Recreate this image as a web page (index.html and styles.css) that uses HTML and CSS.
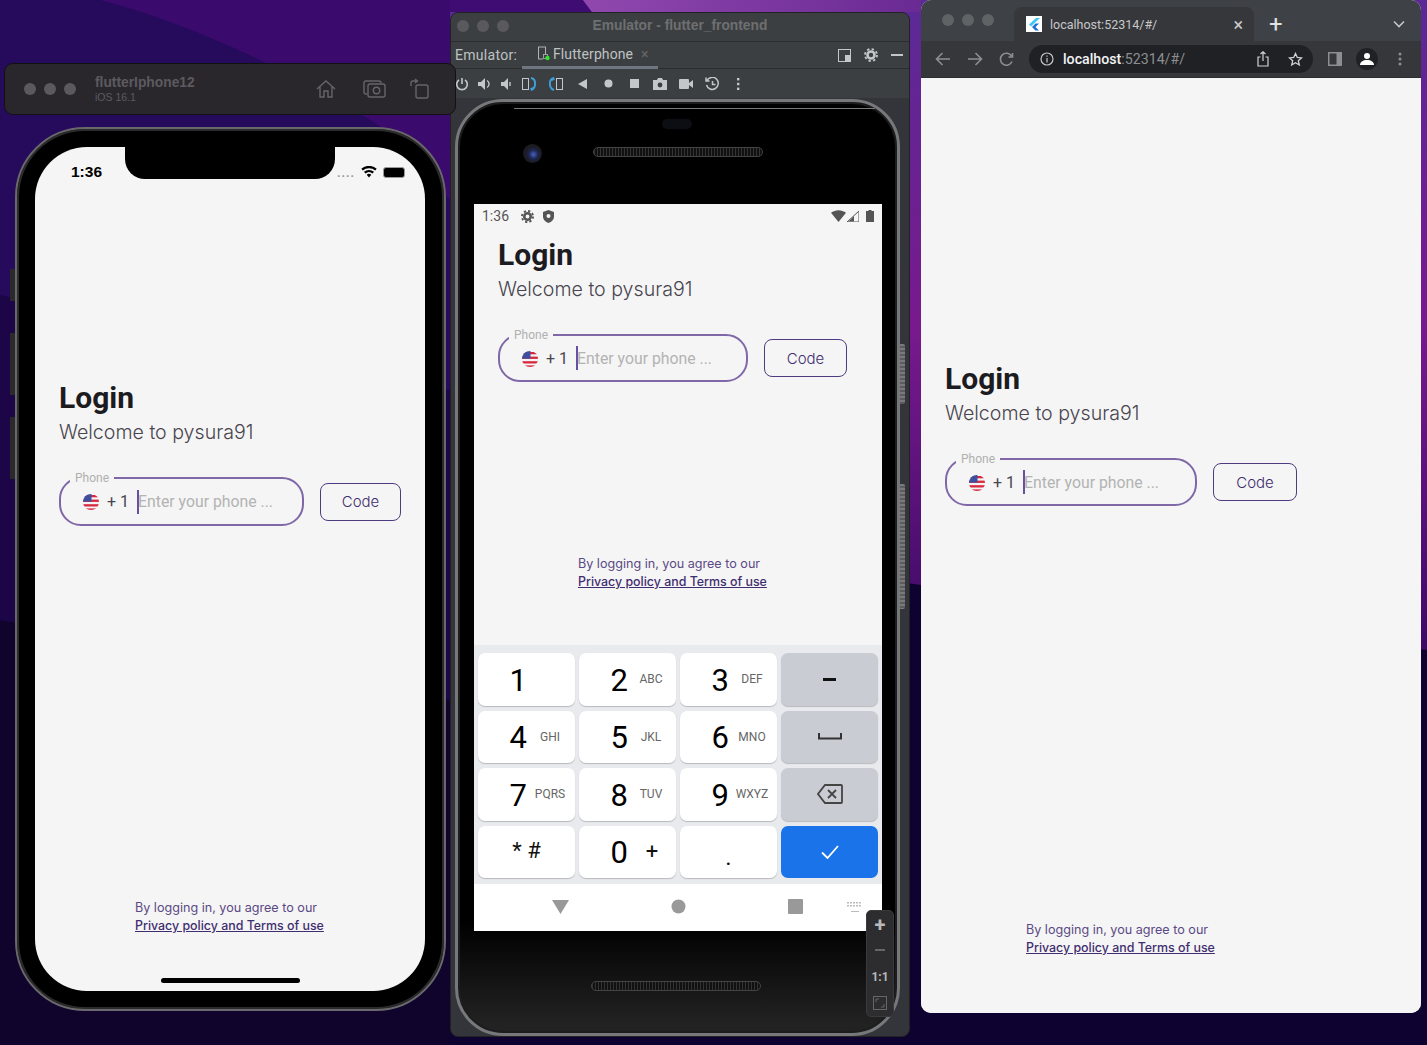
FILE: index.html
```html
<!DOCTYPE html>
<html lang="en">
<head>
    <meta charset="UTF-8">
    <meta name="viewport" content="width=device-width, initial-scale=1.0">
    <title>flutter login on three devices</title>
    <link rel="stylesheet" href="styles.css">
</head>
<body>

    <svg class="hidden-defs" width="0" height="0">
        <defs>
            <clipPath id="flagClip"><circle cx="8" cy="8" r="8"/></clipPath>
            <symbol id="flag" viewBox="0 0 16 16">
                <g clip-path="url(#flagClip)">
                    <rect width="16" height="16" fill="#f4f4f6"/>
                    <rect y="1" width="16" height="2.3" fill="#d8283c"/>
                    <rect y="5.6" width="16" height="2.3" fill="#d8283c"/>
                    <rect y="10.2" width="16" height="2.3" fill="#d8283c"/>
                    <rect y="14.4" width="16" height="2" fill="#d8283c"/>
                    <rect width="8.5" height="7.6" fill="#3d4f9e"/>
                </g>
            </symbol>
        </defs>
    </svg>

    <!-- wallpaper -->
    <svg class="wallpaper" viewBox="0 0 1427 1045" preserveAspectRatio="none">
        <defs>
            <linearGradient id="wallPink" gradientUnits="userSpaceOnUse" x1="0" y1="0" x2="0" y2="650">
                <stop offset="0" stop-color="#5a2a96"/>
                <stop offset="0.5" stop-color="#781a8e"/>
                <stop offset="1" stop-color="#3c0a66"/>
            </linearGradient>
            <linearGradient id="wallTop" gradientUnits="userSpaceOnUse" x1="583" y1="0" x2="920" y2="0">
                <stop offset="0" stop-color="#9048ae"/>
                <stop offset="1" stop-color="#6a2a94"/>
            </linearGradient>
        </defs>
        <rect width="1427" height="1045" fill="#3a0a6c"/>
        <path d="M100 0C200 25 330 90 400 140L450 200V1045H0V0Z" fill="#260a5c"/>
        <path d="M0 295 450 390V1045H0Z" fill="#1c0648"/>
        <path d="M0 620 450 700V1045H0Z" fill="#10032c"/>
        <path d="M583 0H1427V650L921 585 450 520V0Z" fill="url(#wallPink)"/>
        <path d="M450 0H583L592 12H450Z" fill="#3f0c74"/>
        <path d="M583 0H921V12H592Z" fill="url(#wallTop)"/>
        <path d="M450 520 921 585 1427 650V1045H450Z" fill="#0e0330"/>
    </svg>

    <!-- ios simulator toolbar -->
    <div class="sim-bar">
        <div class="lights lights-dim"><i></i><i></i><i></i></div>
        <div class="sim-title">
            <b>flutterIphone12</b>
            <span>iOS 16.1</span>
        </div>
        <div class="sim-icons">
            <svg width="22" height="20" viewBox="0 0 22 20" fill="none" stroke="#66646a" stroke-width="1.4"><path d="M2 10 11 2l9 8M5 8v10h4v-6h4v6h4V8"/></svg>
            <svg width="24" height="20" viewBox="0 0 24 20" fill="none" stroke="#66646a" stroke-width="1.4"><path d="M4 15H3a2 2 0 0 1-2-2V4a2 2 0 0 1 2-2h13a2 2 0 0 1 2 2"/><rect x="5" y="5" width="17" height="13" rx="2"/><circle cx="13.500" cy="11.500" r="3.200"/></svg>
            <svg class="sim-rotate" width="20" height="22" viewBox="0 0 20 22" fill="none" stroke="#66646a" stroke-width="1.4"><rect x="6" y="7" width="12" height="13" rx="2"/><path d="M1 8V5a2 2 0 0 1 2-2h4M5 1 7.500 3 5 5"/></svg>
        </div>
    </div>

    <!-- iphone -->
    <div class="iphone">
        <i class="side-btn side-a"></i><i class="side-btn side-b"></i><i class="side-btn side-c"></i>
        <div class="screen screen-ios">
            <div class="notch"></div>
            <div class="ios-time">1:36</div>
            <div class="ios-status">
                <span class="ios-dots">....</span>
                <svg width="16" height="12" viewBox="0 0 16 12"><path d="M8 11.500 5.700 8.800a3.500 3.500 0 0 1 4.600 0ZM4.500 7.500 3 5.800a7.500 7.500 0 0 1 10 0l-1.500 1.700a5.300 5.300 0 0 0-7 0ZM1.800 4.500 .3 2.800a11.500 11.500 0 0 1 15.400 0l-1.500 1.700a9.300 9.300 0 0 0-12.400 0Z" fill="#000"/></svg>
                <span class="ios-battery"></span>
            </div>
            <div class="login">
                <h1>Login</h1>
                <p class="welcome">Welcome to pysura91</p>
                <div class="form-row">
                    <div class="phone-field">
                        <span class="field-label">Phone</span>
                        <svg class="flag" width="16" height="16"><use href="#flag"/></svg>
                        <span class="dial">+ 1</span>
                        <span class="caret"></span>
                        <span class="placeholder">Enter your phone ...</span>
                    </div>
                    <button class="code-btn">Code</button>
                </div>
            </div>
            <div class="legal">
                <div>By logging in, you agree to our</div>
                <a>Privacy policy and Terms of use</a>
            </div>
            <div class="home-bar"></div>
        </div>
    </div>

    <!-- android studio emulator -->
    <div class="emulator">
        <div class="emu-title">
            <div class="lights lights-dim"><i></i><i></i><i></i></div>
            <span>Emulator - flutter_frontend</span>
        </div>
        <div class="emu-tabs">
            <span class="emu-label">Emulator:</span>
            <div class="emu-tab">
                <svg width="14" height="15" viewBox="0 0 14 15" fill="none"><rect x="1.500" y="1" width="7" height="12" stroke="#b0b4b8"/><rect x="6" y="8" width="7" height="6" fill="#3c3f41"/><rect x="6.500" y="8.500" width="4" height="4" stroke="#b0b4b8" stroke-width=".8"/><circle cx="10.500" cy="12" r="2.200" fill="#2fe32f"/></svg>
                <span>Flutterphone</span>
                <em>×</em>
            </div>
            <div class="emu-tools">
                <svg width="13" height="13" viewBox="0 0 13 13"><rect x=".5" y=".5" width="12" height="12" fill="none" stroke="#c4c7ca"/><rect x="7" y="6" width="5" height="6" fill="#c4c7ca"/></svg>
                <svg width="14" height="14" viewBox="0 0 14 14"><circle cx="7" cy="7" r="3.500" fill="none" stroke="#c4c7ca" stroke-width="2.600"/><circle cx="7" cy="7" r="6" fill="none" stroke="#c4c7ca" stroke-width="1.800" stroke-dasharray="2.400 2.300"/></svg>
                <svg width="12" height="2" viewBox="0 0 12 2"><rect width="12" height="2" fill="#c4c7ca"/></svg>
            </div>
        </div>
        <div class="emu-toolbar">
            <svg width="14" height="14" viewBox="0 0 14 14" fill="none" stroke="#c4c7ca" stroke-width="1.600"><path d="M4 3a5.300 5.300 0 1 0 6 0M7 1v6"/></svg>
            <svg width="14" height="14" viewBox="0 0 14 14"><path d="M0 5h3l4-4v12l-4-4H0Z" fill="#c4c7ca"/><path d="M9 3.500a4 4 0 0 1 0 7" fill="none" stroke="#c4c7ca" stroke-width="1.400"/></svg>
            <svg width="12" height="14" viewBox="0 0 12 14"><path d="M0 5h3l4-4v12l-4-4H0Z" fill="#c4c7ca"/><path d="M9 5v4" stroke="#c4c7ca" stroke-width="1.400"/></svg>
            <svg width="15" height="14" viewBox="0 0 15 14" fill="none"><rect x=".5" y="1.500" width="6" height="11" stroke="#c4c7ca"/><path d="M9 1c5.500 1 5.500 10 0 12M8.500 12.500l3-1.500" stroke="#3d9ed8" stroke-width="2"/></svg>
            <svg width="15" height="14" viewBox="0 0 15 14" fill="none"><rect x="8.500" y="1.500" width="6" height="11" stroke="#c4c7ca"/><path d="M6 1c-5.500 1-5.500 10 0 12M6.500 1.500l-3 1.500" stroke="#3d9ed8" stroke-width="2"/></svg>
            <svg width="9" height="10" viewBox="0 0 9 10"><path d="M9 0v10L0 5Z" fill="#c4c7ca"/></svg>
            <svg width="9" height="9" viewBox="0 0 9 9"><circle cx="4.500" cy="4.500" r="4" fill="#c4c7ca"/></svg>
            <svg width="9" height="9" viewBox="0 0 9 9"><rect width="9" height="9" fill="#c4c7ca"/></svg>
            <svg width="14" height="12" viewBox="0 0 14 12"><path d="M0 2h4l1-2h4l1 2h4v10H0Z" fill="#c4c7ca"/><circle cx="7" cy="7" r="2.400" fill="#3c3f41"/></svg>
            <svg width="14" height="10" viewBox="0 0 14 10"><rect width="10" height="10" rx="1" fill="#c4c7ca"/><path d="M10 4l4-3v8l-4-3Z" fill="#c4c7ca"/></svg>
            <svg width="15" height="14" viewBox="0 0 15 14" fill="none" stroke="#c4c7ca" stroke-width="1.500"><path d="M2 3.500A6 6 0 1 1 1.500 8M1 .5v3.500h3.500M7.500 4v3.500h3"/></svg>
            <svg width="4" height="12" viewBox="0 0 4 12"><g fill="#c4c7ca"><rect x="1" width="2.400" height="2.400"/><rect x="1" y="4.800" width="2.400" height="2.400"/><rect x="1" y="9.600" width="2.400" height="2.400"/></g></svg>
        </div>
        <div class="emu-stage">
            <div class="android">
                <i class="power-btn power-a"></i><i class="power-btn power-b"></i>
                <div class="android-top">
                    <div class="earpiece"></div>
                    <div class="camera"></div>
                    <div class="speaker"></div>
                </div>
                <div class="screen screen-android">
                    <div class="status">
                        <span>1:36</span>
                        <svg width="13" height="13" viewBox="0 0 14 14"><circle cx="7" cy="7" r="3.500" fill="none" stroke="#555" stroke-width="2.800"/><circle cx="7" cy="7" r="6" fill="none" stroke="#555" stroke-width="2" stroke-dasharray="2.400 2.300"/></svg>
                        <svg class="status-shield" width="11" height="13" viewBox="0 0 11 13"><path d="M5.500 0 11 2v4.500c0 3-2.300 5.500-5.500 6.500C2.300 12 0 9.500 0 6.500V2Z" fill="#555"/><circle cx="5.500" cy="6" r="2" fill="#f5f5f5"/></svg>
                        <span class="status-right">
                            <svg width="15" height="12" viewBox="0 0 14 11"><path d="M7 11 0 2.500C4-.8 10-.8 14 2.500Z" fill="#555"/></svg>
                            <svg width="12" height="11" viewBox="0 0 12 11"><path d="M12 0v11H0Z" fill="none" stroke="#555"/><path d="M7 5 1.500 10.500H7Z" fill="#555"/></svg>
                            <svg class="status-battery" width="8" height="12" viewBox="0 0 8 12"><path d="M2.500 0h3v1H8v11H0V1h2.500Z" fill="#555"/></svg>
                        </span>
                    </div>
                    <div class="android-main">
                        <div class="login">
                            <h1>Login</h1>
                            <p class="welcome">Welcome to pysura91</p>
                            <div class="form-row">
                                <div class="phone-field">
                                    <span class="field-label">Phone</span>
                                    <svg class="flag" width="16" height="16"><use href="#flag"/></svg>
                                    <span class="dial">+ 1</span>
                                    <span class="caret"></span>
                                    <span class="placeholder">Enter your phone ...</span>
                                </div>
                                <button class="code-btn">Code</button>
                            </div>
                        </div>
                        <div class="legal">
                            <div>By logging in, you agree to our</div>
                            <a>Privacy policy and Terms of use</a>
                        </div>
                    </div>
                    <div class="keypad">
                        <div class="key"><b>1</b></div>
                        <div class="key"><b>2</b><small>ABC</small></div>
                        <div class="key"><b>3</b><small>DEF</small></div>
                        <div class="key key-grey key-center"><span class="minus"></span></div>
                        <div class="key"><b>4</b><small>GHI</small></div>
                        <div class="key"><b>5</b><small>JKL</small></div>
                        <div class="key"><b>6</b><small>MNO</small></div>
                        <div class="key key-grey key-center">
                            <svg width="24" height="7" viewBox="0 0 24 7" fill="none" stroke="#333" stroke-width="2"><path d="M1 0v5.500h22V0"/></svg>
                        </div>
                        <div class="key"><b>7</b><small>PQRS</small></div>
                        <div class="key"><b>8</b><small>TUV</small></div>
                        <div class="key"><b>9</b><small>WXYZ</small></div>
                        <div class="key key-grey key-center">
                            <svg width="26" height="20" viewBox="0 0 26 20" fill="none" stroke="#444" stroke-width="1.800"><path d="M8 1h16a1 1 0 0 1 1 1v16a1 1 0 0 1-1 1H8L1 10ZM11 6l8 8M19 6l-8 8"/></svg>
                        </div>
                        <div class="key key-center key-symbols">* #</div>
                        <div class="key"><b>0</b><span class="plus">+</span></div>
                        <div class="key key-center key-dot">.</div>
                        <div class="key key-blue key-center">
                            <svg width="18" height="14" viewBox="0 0 18 14" fill="none" stroke="#fff" stroke-width="1.800"><path d="M1 7.500 6.500 13 17 1"/></svg>
                        </div>
                    </div>
                    <div class="android-nav">
                        <svg width="17" height="14" viewBox="0 0 17 14"><path d="M0 0h17L8.500 14Z" fill="#999"/></svg>
                        <svg width="15" height="15" viewBox="0 0 15 15"><circle cx="7.500" cy="7.500" r="7" fill="#999"/></svg>
                        <svg width="15" height="15" viewBox="0 0 15 15"><rect width="15" height="15" rx="1" fill="#999"/></svg>
                        <svg class="nav-kbd" width="16" height="11" viewBox="0 0 16 11" fill="#bbb"><path d="M0 0h2v1.500H0Zm3 0h2v1.500H3Zm3 0h2v1.500H6Zm3 0h2v1.500H9Zm3 0h2v1.500h-2ZM0 3h2v1.500H0Zm3 0h2v1.500H3Zm3 0h2v1.500H6Zm3 0h2v1.500H9Zm3 0h2v1.500h-2ZM4 9h8v1H4Z"/></svg>
                    </div>
                </div>
                <div class="android-bottom">
                    <div class="speaker speaker-low"></div>
                </div>
            </div>
            <div class="zoom-box">
                <span class="zoom-plus">+</span>
                <span class="zoom-minus"></span>
                <span class="zoom-one">1:1</span>
                <svg width="14" height="14" viewBox="0 0 14 14" fill="none" stroke="#666"><rect x=".5" y=".5" width="13" height="13"/><path d="M3 6V3h3M11 8v3H8"/></svg>
            </div>
        </div>
    </div>

    <!-- chrome window -->
    <div class="browser">
        <div class="chrome-tabs">
            <div class="lights lights-chrome"><i></i><i></i><i></i></div>
            <div class="chrome-tab">
                <span class="favicon">
                    <svg width="16" height="16" viewBox="0 0 16 16"><path d="M10 2 3 8.500l2 2L14 2Z" fill="#44c6f5"/><path d="M9.500 7.500 6 11l3.500 3.500H13L9.500 11 13 7.500Z" fill="#1f6ed4"/></svg>
                </span>
                <span class="tab-text">localhost:52314/#/</span>
                <span class="tab-close">×</span>
            </div>
            <span class="tab-new">+</span>
            <svg class="tab-more" width="12" height="8" viewBox="0 0 12 8" fill="none" stroke="#c4c7c9" stroke-width="1.600"><path d="M1 1.500 6 6.500l5-5"/></svg>
        </div>
        <div class="chrome-bar">
            <svg width="16" height="14" viewBox="0 0 16 14" fill="none" stroke="#8c8f92" stroke-width="1.600"><path d="M15 7H2M7.500 1 1.500 7l6 6"/></svg>
            <svg width="16" height="14" viewBox="0 0 16 14" fill="none" stroke="#8c8f92" stroke-width="1.600"><path d="M1 7h13M8.500 1l6 6-6 6"/></svg>
            <svg width="15" height="15" viewBox="0 0 15 15" fill="none" stroke="#8c8f92" stroke-width="1.600"><path d="M13 9.500A6 6 0 1 1 12.500 4M13.500 1v4h-4"/></svg>
            <div class="omnibox">
                <svg width="14" height="14" viewBox="0 0 14 14" fill="none" stroke="#c4c7c9" stroke-width="1.200"><circle cx="7" cy="7" r="6"/><path d="M7 6v4.500M7 3.500v1.300"/></svg>
                <span class="url"><b>localhost</b>:52314/#/</span>
                <svg class="omni-share" width="12" height="16" viewBox="0 0 12 16" fill="none" stroke="#d0d2d4" stroke-width="1.200"><path d="M3.500 6H1v9h10V6H8.500M6 10V1M3.500 3 6 .8 8.500 3"/></svg>
                <svg class="omni-star" width="15" height="15" viewBox="0 0 15 15" fill="none" stroke="#d0d2d4" stroke-width="1.300"><path d="m7.500 1.500 1.800 4 4.200.4-3.200 2.900 1 4.200-3.800-2.300-3.800 2.300 1-4.200L1.500 5.900l4.200-.4Z"/></svg>
            </div>
            <svg class="chrome-side" width="14" height="14" viewBox="0 0 14 14"><rect width="14" height="14" fill="#8c8f92"/><rect x="1.500" y="1.500" width="7" height="11" fill="#36373b"/></svg>
            <span class="avatar">
                <svg width="14" height="14" viewBox="0 0 14 14" fill="#fff"><circle cx="7" cy="4" r="3"/><path d="M0 13c0-3 3-5 7-5s7 2 7 5Z"/></svg>
            </span>
            <svg class="chrome-menu" width="4" height="14" viewBox="0 0 4 14" fill="#8c8f92"><circle cx="2" cy="2" r="1.500"/><circle cx="2" cy="7" r="1.500"/><circle cx="2" cy="12" r="1.500"/></svg>
        </div>
        <div class="screen screen-web">
            <div class="login">
                <h1>Login</h1>
                <p class="welcome">Welcome to pysura91</p>
                <div class="form-row">
                    <div class="phone-field">
                        <span class="field-label">Phone</span>
                        <svg class="flag" width="16" height="16"><use href="#flag"/></svg>
                        <span class="dial">+ 1</span>
                        <span class="caret"></span>
                        <span class="placeholder">Enter your phone ...</span>
                    </div>
                    <button class="code-btn">Code</button>
                </div>
            </div>
            <div class="legal">
                <div>By logging in, you agree to our</div>
                <a>Privacy policy and Terms of use</a>
            </div>
        </div>
    </div>

</body>
</html>
```

FILE: styles.css
```css
* {
    box-sizing: border-box;
}
body {
    margin: 0;
    width: 1427px;
    height: 1045px;
    overflow: hidden;
    position: relative;
    background-color: #150438;
    font-family: Roboto, "Liberation Sans", sans-serif;
}
.hidden-defs {
    position: absolute;
}
.wallpaper {
    position: absolute;
    left: 0;
    top: 0;
    width: 1427px;
    height: 1045px;
}

/* traffic lights */
.lights {
    display: flex;
    gap: 8px;
}
.lights i {
    width: 12px;
    height: 12px;
    border-radius: 50%;
    background-color: #5a5a5e;
}
.lights-chrome i {
    background-color: #5f6366;
}

/* ios toolbar */
.sim-bar {
    position: absolute;
    z-index: 2;
    left: 4px;
    top: 63px;
    width: 452px;
    height: 52px;
    background-color: #2a272c;
    border: 1px solid #111;
    border-radius: 9px;
    display: flex;
    align-items: center;
    padding-left: 19px;
    padding-right: 25px;
}
.sim-title {
    margin-left: 19px;
    display: flex;
    flex-direction: column;
    color: #5c5a60;
    font-family: "Liberation Sans", sans-serif;
}
.sim-title b {
    font-size: 13.800px;
    line-height: 16px;
}
.sim-title span {
    font-size: 10.500px;
    line-height: 13px;
}
.sim-icons {
    margin-left: auto;
    display: flex;
    align-items: center;
    gap: 26px;
}
.sim-rotate {
    margin-left: -3px;
}

/* shared login content */
.screen {
    background-color: #f5f5f5;
    position: relative;
    display: flex;
    flex-direction: column;
    color: #1c1b1f;
}
.login {
    padding-left: 24px;
}
.login h1 {
    margin: 0;
    font-size: 30px;
    line-height: 36px;
    font-weight: 700;
    color: #1c1b1f;
}
.welcome {
    margin: 0 0 29px 0;
    height: 32px;
    font-family: Inter, "Liberation Sans", sans-serif;
    font-size: 19.600px;
    line-height: 32px;
    font-weight: 300;
    color: #49454f;
}
.form-row {
    display: flex;
    align-items: center;
    gap: 16px;
}
.phone-field {
    flex: 1;
    height: 48px;
    position: relative;
    display: flex;
    align-items: center;
    padding-left: 22px;
    border: 2px solid #7f67a8;
    border-radius: 22px;
}
.field-label {
    position: absolute;
    left: 9px;
    top: -8px;
    padding: 0 5px;
    font-size: 12px;
    line-height: 14px;
    color: #b0b0b0;
    background-color: #f5f5f5;
}
.flag {
    flex-shrink: 0;
    margin-top: 1px;
}
.dial {
    margin-left: 8px;
    font-size: 16px;
    color: #49454f;
}
.caret {
    width: 2px;
    height: 24px;
    margin-left: 8px;
    background-color: #6750a4;
}
.placeholder {
    margin-left: -1px;
    font-size: 15.800px;
    color: #b3b3b3;
    white-space: nowrap;
}
.code-btn {
    height: 38px;
    padding: 0;
    font-family: Inter, "Liberation Sans", sans-serif;
    font-size: 15px;
    font-weight: 300;
    color: #3f2d70;
    background-color: transparent;
    border: 1px solid #4f3c80;
    border-radius: 8px;
}
.legal {
    font-family: Inter, "Liberation Sans", sans-serif;
    font-size: 12.600px;
    line-height: 18px;
    color: #5b4a85;
}
.legal a {
    display: inline-block;
    font-size: 12.400px;
    color: #3f2d70;
    font-weight: 500;
    text-decoration: underline;
}

/* iphone */
.iphone {
    position: absolute;
    left: 15px;
    top: 127px;
    width: 431px;
    height: 884px;
    padding: 18px;
    background-color: #000;
    border: 2px solid #69686b;
    border-radius: 70px;
    box-shadow: inset 0 0 0 2px #2b2b2d;
}
.side-btn {
    position: absolute;
    left: -7px;
    width: 5px;
    background-color: #2a2a2c;
}
.side-a {
    top: 140px;
    height: 32px;
}
.side-b {
    top: 204px;
    height: 62px;
}
.side-c {
    top: 288px;
    height: 62px;
}
.screen-ios {
    width: 390px;
    height: 844px;
    border-radius: 52px;
    overflow: hidden;
}
.screen-ios .login {
    margin-top: 233px;
}
.screen-ios .form-row {
    width: 342px;
}
.screen-ios .phone-field {
    height: 49px;
}
.screen-ios .code-btn {
    width: 81px;
}
.screen-ios .legal {
    margin-top: 373px;
    padding-left: 100px;
}
.notch {
    position: absolute;
    left: 90px;
    top: 0;
    width: 210px;
    height: 32px;
    background-color: #000;
    border-radius: 0 0 20px 20px;
}
.ios-time {
    position: absolute;
    left: 36px;
    top: 15px;
    font-family: "Liberation Sans", sans-serif;
    font-size: 15.500px;
    line-height: 20px;
    font-weight: 700;
    color: #000;
}
.ios-status {
    position: absolute;
    right: 20px;
    top: 18px;
    display: flex;
    align-items: center;
    gap: 6px;
}
.ios-dots {
    font-size: 12px;
    line-height: 12px;
    letter-spacing: 1px;
    margin-top: 2px;
    color: #999;
    font-weight: 700;
}
.ios-battery {
    width: 22px;
    height: 11px;
    background-color: #000;
    border: 1px solid #999;
    border-radius: 3px;
}
.home-bar {
    position: absolute;
    left: 126px;
    bottom: 8px;
    width: 139px;
    height: 5px;
    background-color: #000;
    border-radius: 3px;
}

/* emulator */
.emulator {
    position: absolute;
    left: 450px;
    top: 12px;
    width: 460px;
    height: 1025px;
    background-color: #33353a;
    border-radius: 8px;
    border: 1px solid #222;
    overflow: hidden;
    display: flex;
    flex-direction: column;
}
.emu-title {
    height: 29px;
    flex-shrink: 0;
    padding-bottom: 3px;
    background-color: #3c3f41;
    border-bottom: 1px solid #2b2d2e;
    display: flex;
    align-items: center;
    justify-content: center;
    position: relative;
    font-family: "Liberation Sans", sans-serif;
    font-size: 13.800px;
    font-weight: 700;
    color: #6d6f71;
}
.emu-title .lights {
    position: absolute;
    left: 6px;
    top: 7px;
}
.emu-tabs {
    height: 27px;
    flex-shrink: 0;
    background-color: #3c3f41;
    border-bottom: 1px solid #2b2d2e;
    display: flex;
    align-items: center;
    padding-left: 4px;
    font-size: 14px;
    color: #bfc2c4;
}
.emu-label {
    width: 67px;
    letter-spacing: .3px;
}
.emu-tab {
    height: 27px;
    width: 136px;
    padding-left: 15px;
    display: flex;
    align-items: center;
    gap: 2px;
    border-bottom: 3px solid #6f7680;
    letter-spacing: .1px;
}
.emu-tab em {
    font-style: normal;
    margin-left: 6px;
    color: #666;
}
.emu-tools {
    margin-left: auto;
    padding-right: 6px;
    display: flex;
    align-items: center;
    gap: 13px;
}
.emu-toolbar {
    height: 29px;
    flex-shrink: 0;
    background-color: #3c3f41;
    display: grid;
    grid-template-columns: repeat(4, 22.500px) 28px repeat(7, 26px);
    justify-items: center;
    align-items: center;
}
.emu-stage {
    flex: 1;
    position: relative;
    padding: 1px 0 0 4px;
}
.android {
    position: relative;
    width: 445px;
    height: 937px;
    background: linear-gradient(#000 88%, #222 99%);
    border: 3px solid #77787a;
    border-radius: 48px;
    padding: 0 16px;
    display: flex;
    flex-direction: column;
    box-shadow: inset 0 0 0 2px #1d1d1f;
}
.power-btn {
    position: absolute;
    left: 442px;
    width: 5px;
    background: repeating-linear-gradient(#7a7a7c 0 2px, #5c5c5e 2px 4px);
    border-radius: 0 2px 2px 0;
}
.power-a {
    top: 242px;
    height: 60px;
}
.power-b {
    top: 382px;
    height: 125px;
}
.android-top {
    height: 102px;
    flex-shrink: 0;
    position: relative;
}
.android-top::before {
    content: "";
    position: absolute;
    left: 40px;
    right: 6px;
    top: 6px;
    height: 1px;
    background-color: #7a7a7c;
    border-radius: 1px;
}
.earpiece {
    position: absolute;
    left: 188px;
    top: 17px;
    width: 30px;
    height: 10px;
    border-radius: 5px;
    background-color: #0c0e14;
}
.camera {
    position: absolute;
    left: 49px;
    top: 42px;
    width: 19px;
    height: 19px;
    border-radius: 50%;
    background: radial-gradient(circle at 55% 55%, #4a60c0 0, #1d2650 30%, #1b1b20 55%, #222 100%);
}
.speaker {
    position: absolute;
    left: 119px;
    top: 45px;
    width: 170px;
    height: 10px;
    border-radius: 5px;
    background: repeating-linear-gradient(90deg, #333 0 1px, #111 1px 3px);
    border: 1px solid #444;
}
.android-bottom {
    flex: 1;
    position: relative;
}
.speaker-low {
    left: 117px;
    top: 50px;
}
.screen-android {
    width: 408px;
    height: 727px;
    flex-shrink: 0;
}
.status {
    height: 24px;
    flex-shrink: 0;
    display: flex;
    align-items: center;
    gap: 12px;
    padding: 0 8px;
    font-size: 14px;
    color: #555;
}
.status-shield {
    margin-left: -3px;
}
.status-right {
    margin-left: auto;
    display: flex;
    align-items: center;
    gap: 1px;
}
.status-battery {
    margin-left: 6px;
}
.android-main {
    flex: 1;
}
.screen-android .login {
    margin-top: 9px;
}
.screen-android .form-row {
    width: 349px;
}
.screen-android .code-btn {
    width: 83px;
}
.screen-android .legal {
    margin-top: 173px;
    padding-left: 104px;
}
.keypad {
    height: 239px;
    flex-shrink: 0;
    background-color: #e8eaed;
    padding: 8px 4px;
    display: grid;
    grid-template-columns: repeat(4, 97px);
    grid-template-rows: repeat(4, 52.500px);
    column-gap: 4px;
    row-gap: 5px;
}
.key {
    background-color: #fff;
    border-radius: 7px;
    box-shadow: 0 1px 1px #b8babd;
    display: grid;
    grid-template-columns: 49px 48px;
    align-items: center;
}
.key b {
    padding-top: 2px;
    font-size: 31px;
    font-weight: 400;
    color: #000;
    text-align: right;
}
.key small {
    padding-right: 2px;
    font-size: 12px;
    color: #666;
    text-align: center;
    white-space: nowrap;
}
.plus {
    font-size: 22px;
    text-align: center;
    color: #111;
}
.key-center {
    display: flex;
    justify-content: center;
    align-items: center;
}
.key-grey {
    background-color: #c9ccd3;
}
.key-blue {
    background-color: #1a73e8;
    box-shadow: none;
}
.key-symbols {
    font-size: 22px;
    color: #111;
    padding-bottom: 2px;
}
.key-dot {
    font-size: 24px;
    color: #111;
    padding-top: 10px;
}
.minus {
    width: 13px;
    height: 3px;
    background-color: #111;
}
.android-nav {
    height: 47px;
    flex-shrink: 0;
    padding-bottom: 2px;
    background-color: #fff;
    position: relative;
    display: flex;
    align-items: center;
    padding-left: 78px;
    gap: 102px;
}
.nav-kbd {
    position: absolute;
    right: 19px;
    top: 18px;
}
.zoom-box {
    position: absolute;
    left: 415px;
    top: 812px;
    width: 28px;
    height: 107px;
    background-color: #2d2d2f;
    border: 1px solid #3a3a3c;
    border-radius: 5px;
    display: flex;
    flex-direction: column;
    align-items: center;
    color: #b9b9b9;
    font-weight: 700;
}
.zoom-plus {
    font-size: 20px;
    line-height: 26px;
    margin-top: 1px;
}
.zoom-minus {
    width: 10px;
    height: 2px;
    margin-top: 11px;
    background-color: #666;
}
.zoom-one {
    font-size: 12px;
    line-height: 14px;
    margin-top: 19px;
    margin-bottom: 12px;
}

/* browser */
.browser {
    position: absolute;
    left: 921px;
    top: 0;
    width: 500px;
    height: 1013px;
    border-radius: 10px;
    overflow: hidden;
    display: flex;
    flex-direction: column;
    background-color: #f5f5f5;
}
.chrome-tabs {
    height: 41px;
    flex-shrink: 0;
    background-color: #3e4145;
    display: flex;
    align-items: flex-end;
    position: relative;
    padding-left: 21px;
}
.chrome-tabs .lights {
    position: absolute;
    left: 21px;
    top: 14px;
}
.chrome-tab {
    margin-left: 72px;
    width: 240px;
    height: 34px;
    background-color: #36373b;
    border-radius: 8px 8px 0 0;
    display: flex;
    align-items: center;
    padding-left: 12px;
    font-size: 12.500px;
    color: #c6c8ca;
}
.favicon {
    width: 16px;
    height: 16px;
    flex-shrink: 0;
    background-color: #fff;
}
.tab-text {
    margin-left: 8px;
}
.tab-close {
    margin-left: auto;
    margin-right: 11px;
    font-size: 18px;
}
.tab-new {
    margin-left: 15px;
    margin-bottom: 2px;
    font-size: 24px;
    line-height: 30px;
    color: #e0e2e4;
}
.tab-more {
    position: absolute;
    right: 16px;
    top: 20px;
}
.chrome-bar {
    height: 37px;
    flex-shrink: 0;
    background-color: #36373b;
    display: flex;
    align-items: center;
    padding-left: 14px;
    gap: 16px;
    border-bottom: 1px solid #2c2d30;
}
.omnibox {
    width: 284px;
    height: 28px;
    margin-left: -1px;
    background-color: #202124;
    border-radius: 14px;
    display: flex;
    align-items: center;
    padding-left: 11px;
    color: #8c8f92;
    font-size: 14.200px;
}
.url {
    margin-left: 9px;
}
.url b {
    font-weight: 500;
    color: #f1f3f4;
}
.omni-share {
    margin-left: auto;
}
.omni-star {
    margin-left: 19px;
    margin-right: 10px;
}
.chrome-side {
    margin-left: -1px;
}
.avatar {
    width: 22px;
    height: 22px;
    margin-left: -2px;
    border-radius: 50%;
    background-color: #202124;
    display: flex;
    align-items: center;
    justify-content: center;
}
.chrome-menu {
    margin-left: 4px;
}
.screen-web {
    flex: 1;
}
.screen-web .login {
    margin-top: 283px;
}
.screen-web .form-row {
    width: 352px;
}
.screen-web .code-btn {
    width: 84px;
}
.screen-web .legal {
    margin-top: 415px;
    padding-left: 105px;
}
```
